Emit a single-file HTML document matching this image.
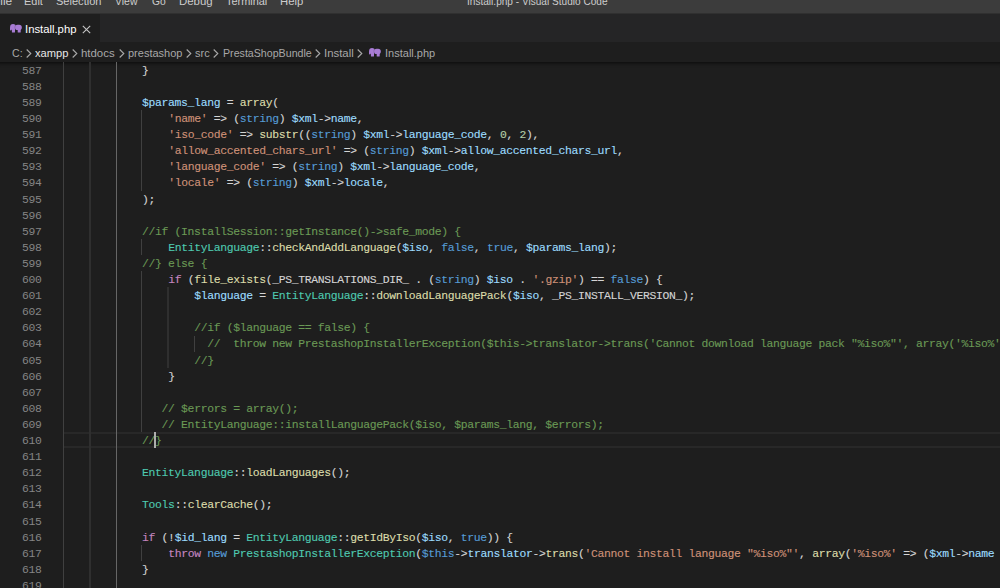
<!DOCTYPE html>
<html><head><meta charset="utf-8"><style>
*{margin:0;padding:0;box-sizing:border-box}
html,body{width:1000px;height:588px;overflow:hidden;background:#1e1e1e}
body{position:relative;font-family:"Liberation Sans",sans-serif}
.abs{position:absolute}
#menu{left:0;top:0;width:1000px;height:13px;background:#3c3c3c}
#menu span{position:absolute;top:-6px;font-size:11px;color:#cccccc;line-height:13px;white-space:nowrap}
#tabs{left:0;top:13px;width:1000px;height:29px;background:#252526}
#tab{left:0;top:13px;width:100px;height:29px;background:#1e1e1e}
#crumbs{left:0;top:42px;width:1000px;height:21px;background:#1e1e1e}
.cr{position:absolute;top:46px;font-size:11.5px;line-height:14px;color:#a9a9a9;white-space:nowrap}
.code{position:absolute;left:0;height:16px;font-family:"Liberation Mono",monospace;font-size:11.4px;letter-spacing:-0.332px;line-height:16px;white-space:pre;color:#d4d4d4;-webkit-text-stroke:0.12px currentColor}
.num{position:absolute;left:0;width:41.6px;text-align:right;height:16px;font-family:"Liberation Mono",monospace;font-size:11.4px;letter-spacing:-0.332px;line-height:16px;color:#858585}
.g{position:absolute;width:1px;background:#404040}
.d{color:#d4d4d4}
.v{color:#9cdcfe}
.s{color:#ce9178}
.k{color:#569cd6}
.f{color:#dcdcaa}
.c{color:#6a9955}
.t{color:#4ec9b0}
.p{color:#c586c0}
.n{color:#b5cea8}
</style></head><body>
<div id="menu" class="abs"></div><div class="abs" style="left:24.42px;top:-4.51px;font-size:11.00px;line-height:11.00px;color:#cccccc;white-space:nowrap;transform-origin:0 0;transform:scaleX(0.9953)">Edit</div><div class="abs" style="left:56.30px;top:-4.51px;font-size:11.00px;line-height:11.00px;color:#cccccc;white-space:nowrap;transform-origin:0 0;transform:scaleX(1.0043)">Selection</div><div class="abs" style="left:115.45px;top:-4.51px;font-size:11.00px;line-height:11.00px;color:#cccccc;white-space:nowrap;transform-origin:0 0;transform:scaleX(0.9494)">View</div><div class="abs" style="left:151.89px;top:-4.51px;font-size:11.00px;line-height:11.00px;color:#cccccc;white-space:nowrap;transform-origin:0 0;transform:scaleX(0.9346)">Go</div><div class="abs" style="left:178.69px;top:-4.51px;font-size:11.00px;line-height:11.00px;color:#cccccc;white-space:nowrap;transform-origin:0 0;transform:scaleX(1.0371)">Debug</div><div class="abs" style="left:226.28px;top:-4.51px;font-size:11.00px;line-height:11.00px;color:#cccccc;white-space:nowrap;transform-origin:0 0;transform:scaleX(0.9929)">Terminal</div><div class="abs" style="left:279.99px;top:-4.51px;font-size:11.00px;line-height:11.00px;color:#cccccc;white-space:nowrap;transform-origin:0 0;transform:scaleX(1.0289)">Help</div><div class="abs" style="left:466.59px;top:-4.51px;font-size:11.00px;line-height:11.00px;color:#cccccc;white-space:nowrap;transform-origin:0 0;transform:scaleX(0.9167)">Install.php - Visual Studio Code</div><div class="abs" style="left:-7.45px;top:-4.51px;font-size:11.00px;line-height:11.00px;color:#cccccc;white-space:nowrap;transform-origin:0 0;transform:scaleX(1.0799)">File</div>
<div id="tabs" class="abs"></div><div id="tab" class="abs"></div><div class="abs" style="left:0;top:13px;width:1000px;height:1px;background:#303030"></div>
<div id="crumbs" class="abs"></div>
<svg class="abs" style="left:10px;top:24px" width="12" height="9" viewBox="0 0 12 9"><g fill="#a87cd4"><ellipse cx="3" cy="3.1" rx="2.9" ry="3"/><rect x="0" y="3" width="1.6" height="3.6" rx="0.8"/><rect x="5" y="0.7" width="6.8" height="5.4" rx="2.6"/><rect x="1.9" y="4.4" width="3.1" height="4.1" rx="0.6"/><rect x="7.7" y="4.4" width="3.0" height="4.1" rx="0.6"/></g><path d="M5.2 1.4 Q4.5 3.3 5.2 5" stroke="#7a5a9a" stroke-width="0.5" fill="none"/></svg><div class="abs" style="left:24.98px;top:23.89px;font-size:11.00px;line-height:11.00px;color:#ffffff;white-space:nowrap;transform-origin:0 0;transform:scaleX(1.0261)">Install.php</div><svg class="abs" style="left:82px;top:25px" width="9" height="9" viewBox="0 0 9 9"><path d="M0.8 0.8 L8.2 8.2 M8.2 0.8 L0.8 8.2" stroke="#c5c5c5" stroke-width="1.1"/></svg>
<div class="abs" style="left:11.87px;top:47.79px;font-size:11.00px;line-height:11.00px;color:#a8a8a8;white-space:nowrap;transform-origin:0 0;transform:scaleX(0.9619)">C:</div><div class="abs" style="left:35.29px;top:47.79px;font-size:11.00px;line-height:11.00px;color:#e6e6e6;white-space:nowrap;transform-origin:0 0;transform:scaleX(1.0139)">xampp</div><div class="abs" style="left:81.20px;top:47.79px;font-size:11.00px;line-height:11.00px;color:#a8a8a8;white-space:nowrap;transform-origin:0 0;transform:scaleX(1.0371)">htdocs</div><div class="abs" style="left:127.78px;top:47.79px;font-size:11.00px;line-height:11.00px;color:#a8a8a8;white-space:nowrap;transform-origin:0 0;transform:scaleX(1.0011)">prestashop</div><div class="abs" style="left:195.13px;top:47.79px;font-size:11.00px;line-height:11.00px;color:#a8a8a8;white-space:nowrap;transform-origin:0 0;transform:scaleX(0.9975)">src</div><div class="abs" style="left:222.55px;top:47.79px;font-size:11.00px;line-height:11.00px;color:#a8a8a8;white-space:nowrap;transform-origin:0 0;transform:scaleX(0.9677)">PrestaShopBundle</div><div class="abs" style="left:324.18px;top:47.79px;font-size:11.00px;line-height:11.00px;color:#a8a8a8;white-space:nowrap;transform-origin:0 0;transform:scaleX(1.0331)">Install</div><div class="abs" style="left:384.51px;top:47.79px;font-size:11.00px;line-height:11.00px;color:#a8a8a8;white-space:nowrap;transform-origin:0 0;transform:scaleX(1.0014)">Install.php</div><svg class="abs" style="left:26.0px;top:48.6px" width="6" height="9" viewBox="0 0 6 9"><path d="M0.7 0.5 L4.8 4.5 L0.7 8.5" fill="none" stroke="#a8a8a8" stroke-width="1.1"/></svg><svg class="abs" style="left:72.2px;top:48.6px" width="6" height="9" viewBox="0 0 6 9"><path d="M0.7 0.5 L4.8 4.5 L0.7 8.5" fill="none" stroke="#a8a8a8" stroke-width="1.1"/></svg><svg class="abs" style="left:119.0px;top:48.6px" width="6" height="9" viewBox="0 0 6 9"><path d="M0.7 0.5 L4.8 4.5 L0.7 8.5" fill="none" stroke="#a8a8a8" stroke-width="1.1"/></svg><svg class="abs" style="left:186.3px;top:48.6px" width="6" height="9" viewBox="0 0 6 9"><path d="M0.7 0.5 L4.8 4.5 L0.7 8.5" fill="none" stroke="#a8a8a8" stroke-width="1.1"/></svg><svg class="abs" style="left:213.4px;top:48.6px" width="6" height="9" viewBox="0 0 6 9"><path d="M0.7 0.5 L4.8 4.5 L0.7 8.5" fill="none" stroke="#a8a8a8" stroke-width="1.1"/></svg><svg class="abs" style="left:315.2px;top:48.6px" width="6" height="9" viewBox="0 0 6 9"><path d="M0.7 0.5 L4.8 4.5 L0.7 8.5" fill="none" stroke="#a8a8a8" stroke-width="1.1"/></svg><svg class="abs" style="left:357.0px;top:48.6px" width="6" height="9" viewBox="0 0 6 9"><path d="M0.7 0.5 L4.8 4.5 L0.7 8.5" fill="none" stroke="#a8a8a8" stroke-width="1.1"/></svg><svg class="abs" style="left:369px;top:48px" width="12" height="9" viewBox="0 0 12 9"><g fill="#a87cd4"><ellipse cx="3" cy="3.1" rx="2.9" ry="3"/><rect x="0" y="3" width="1.6" height="3.6" rx="0.8"/><rect x="5" y="0.7" width="6.8" height="5.4" rx="2.6"/><rect x="1.9" y="4.4" width="3.1" height="4.1" rx="0.6"/><rect x="7.7" y="4.4" width="3.0" height="4.1" rx="0.6"/></g><path d="M5.2 1.4 Q4.5 3.3 5.2 5" stroke="#7a5a9a" stroke-width="0.5" fill="none"/></svg><div class="abs" style="left:0;top:62px;width:1000px;height:6px;box-shadow:inset 0 5px 5px -5px #000"></div>
<div class="abs" style="left:63px;top:432.00px;width:937px;height:16px;border-top:2px solid #282828;border-bottom:2px solid #282828"></div>
<div class="num" style="top:62.70px">587</div><div class="code" style="top:62.70px;left:142.10px"><span class="d">}</span></div>
<div class="num" style="top:78.80px">588</div>
<div class="num" style="top:94.90px">589</div><div class="code" style="top:94.90px;left:142.10px"><span class="v">$params_lang</span><span class="d"> = </span><span class="f">array</span><span class="d">(</span></div>
<div class="num" style="top:111.00px">590</div><div class="code" style="top:111.00px;left:168.13px"><span class="s">&#x27;name&#x27;</span><span class="d"> =&gt; (</span><span class="k">string</span><span class="d">) </span><span class="v">$xml</span><span class="d">-&gt;</span><span class="v">name</span><span class="d">,</span></div>
<div class="num" style="top:127.10px">591</div><div class="code" style="top:127.10px;left:168.13px"><span class="s">&#x27;iso_code&#x27;</span><span class="d"> =&gt; </span><span class="f">substr</span><span class="d">((</span><span class="k">string</span><span class="d">) </span><span class="v">$xml</span><span class="d">-&gt;</span><span class="v">language_code</span><span class="d">, </span><span class="n">0</span><span class="d">, </span><span class="n">2</span><span class="d">),</span></div>
<div class="num" style="top:143.20px">592</div><div class="code" style="top:143.20px;left:168.13px"><span class="s">&#x27;allow_accented_chars_url&#x27;</span><span class="d"> =&gt; (</span><span class="k">string</span><span class="d">) </span><span class="v">$xml</span><span class="d">-&gt;</span><span class="v">allow_accented_chars_url</span><span class="d">,</span></div>
<div class="num" style="top:159.30px">593</div><div class="code" style="top:159.30px;left:168.13px"><span class="s">&#x27;language_code&#x27;</span><span class="d"> =&gt; (</span><span class="k">string</span><span class="d">) </span><span class="v">$xml</span><span class="d">-&gt;</span><span class="v">language_code</span><span class="d">,</span></div>
<div class="num" style="top:175.40px">594</div><div class="code" style="top:175.40px;left:168.13px"><span class="s">&#x27;locale&#x27;</span><span class="d"> =&gt; (</span><span class="k">string</span><span class="d">) </span><span class="v">$xml</span><span class="d">-&gt;</span><span class="v">locale</span><span class="d">,</span></div>
<div class="num" style="top:191.50px">595</div><div class="code" style="top:191.50px;left:142.10px"><span class="d">);</span></div>
<div class="num" style="top:207.60px">596</div>
<div class="num" style="top:223.70px">597</div><div class="code" style="top:223.70px;left:142.10px"><span class="c">//if (InstallSession::getInstance()-&gt;safe_mode) {</span></div>
<div class="num" style="top:239.80px">598</div><div class="code" style="top:239.80px;left:168.13px"><span class="t">EntityLanguage</span><span class="d">::</span><span class="f">checkAndAddLanguage</span><span class="d">(</span><span class="v">$iso</span><span class="d">, </span><span class="k">false</span><span class="d">, </span><span class="k">true</span><span class="d">, </span><span class="v">$params_lang</span><span class="d">);</span></div>
<div class="num" style="top:255.90px">599</div><div class="code" style="top:255.90px;left:142.10px"><span class="c">//} else {</span></div>
<div class="num" style="top:272.00px">600</div><div class="code" style="top:272.00px;left:168.13px"><span class="p">if</span><span class="d"> (</span><span class="f">file_exists</span><span class="d">(_PS_TRANSLATIONS_DIR_ . (</span><span class="k">string</span><span class="d">) </span><span class="v">$iso</span><span class="d"> . </span><span class="s">&#x27;.gzip&#x27;</span><span class="d">) == </span><span class="k">false</span><span class="d">) {</span></div>
<div class="num" style="top:288.10px">601</div><div class="code" style="top:288.10px;left:194.16px"><span class="v">$language</span><span class="d"> = </span><span class="t">EntityLanguage</span><span class="d">::</span><span class="f">downloadLanguagePack</span><span class="d">(</span><span class="v">$iso</span><span class="d">, _PS_INSTALL_VERSION_);</span></div>
<div class="num" style="top:304.20px">602</div>
<div class="num" style="top:320.30px">603</div><div class="code" style="top:320.30px;left:194.16px"><span class="c">//if ($language == false) {</span></div>
<div class="num" style="top:336.40px">604</div><div class="code" style="top:336.40px;left:207.18px"><span class="c">//  throw new PrestashopInstallerException($this-&gt;translator-&gt;trans(&#x27;Cannot download language pack &quot;%iso%&quot;&#x27;, array(&#x27;%iso%&#x27; =&gt; ($xml-&gt;name ? $xml-&gt;name : $iso)), &#x27;Install&#x27;));</span></div>
<div class="num" style="top:352.50px">605</div><div class="code" style="top:352.50px;left:194.16px"><span class="c">//}</span></div>
<div class="num" style="top:368.60px">606</div><div class="code" style="top:368.60px;left:168.13px"><span class="d">}</span></div>
<div class="num" style="top:384.70px">607</div>
<div class="num" style="top:400.80px">608</div><div class="code" style="top:400.80px;left:161.62px"><span class="c">// $errors = array();</span></div>
<div class="num" style="top:416.90px">609</div><div class="code" style="top:416.90px;left:161.62px"><span class="c">// EntityLanguage::installLanguagePack($iso, $params_lang, $errors);</span></div>
<div class="num" style="top:433.00px">610</div><div class="code" style="top:433.00px;left:142.10px"><span class="c">//}</span></div>
<div class="num" style="top:449.10px">611</div>
<div class="num" style="top:465.20px">612</div><div class="code" style="top:465.20px;left:142.10px"><span class="t">EntityLanguage</span><span class="d">::</span><span class="f">loadLanguages</span><span class="d">();</span></div>
<div class="num" style="top:481.30px">613</div>
<div class="num" style="top:497.40px">614</div><div class="code" style="top:497.40px;left:142.10px"><span class="t">Tools</span><span class="d">::</span><span class="f">clearCache</span><span class="d">();</span></div>
<div class="num" style="top:513.50px">615</div>
<div class="num" style="top:529.60px">616</div><div class="code" style="top:529.60px;left:142.10px"><span class="p">if</span><span class="d"> (!</span><span class="v">$id_lang</span><span class="d"> = </span><span class="t">EntityLanguage</span><span class="d">::</span><span class="f">getIdByIso</span><span class="d">(</span><span class="v">$iso</span><span class="d">, </span><span class="k">true</span><span class="d">)) {</span></div>
<div class="num" style="top:545.70px">617</div><div class="code" style="top:545.70px;left:168.13px"><span class="p">throw</span><span class="d"> </span><span class="k">new</span><span class="d"> </span><span class="t">PrestashopInstallerException</span><span class="d">(</span><span class="k">$this</span><span class="d">-&gt;</span><span class="v">translator</span><span class="d">-&gt;</span><span class="f">trans</span><span class="d">(</span><span class="s">&#x27;Cannot install language &quot;%iso%&quot;&#x27;</span><span class="d">, </span><span class="f">array</span><span class="d">(</span><span class="s">&#x27;%iso%&#x27;</span><span class="d"> =&gt; (</span><span class="v">$xml</span><span class="d">-&gt;</span><span class="v">name</span><span class="d"> ? </span><span class="v">$xml</span><span class="d">-&gt;</span><span class="v">name</span><span class="d"> : </span><span class="v">$iso</span><span class="d">))</span></div>
<div class="num" style="top:561.80px">618</div><div class="code" style="top:561.80px;left:142.10px"><span class="d">}</span></div>
<div class="num" style="top:577.90px">619</div>
<div class="g" style="left:63px;width:1px;top:62.00px;height:526.00px;background:#404040"></div>
<div class="g" style="left:89px;width:2px;top:62.00px;height:526.00px;background:#2f2f2f"></div>
<div class="g" style="left:116px;width:1px;top:62.00px;height:526.00px;background:#666666"></div>
<div class="g" style="left:141px;width:1px;top:110.30px;height:80.50px;background:#404040"></div>
<div class="g" style="left:141px;width:1px;top:239.10px;height:16.10px;background:#404040"></div>
<div class="g" style="left:141px;width:1px;top:271.30px;height:161.00px;background:#404040"></div>
<div class="g" style="left:167px;width:2px;top:287.40px;height:80.50px;background:#2f2f2f"></div>
<div class="g" style="left:194px;width:1px;top:335.70px;height:16.10px;background:#404040"></div>
<div class="g" style="left:141px;width:1px;top:545.00px;height:16.10px;background:#404040"></div>
<div class="abs" style="left:154px;top:432.00px;width:2px;height:16px;background:#aeafad"></div>
</body></html>
